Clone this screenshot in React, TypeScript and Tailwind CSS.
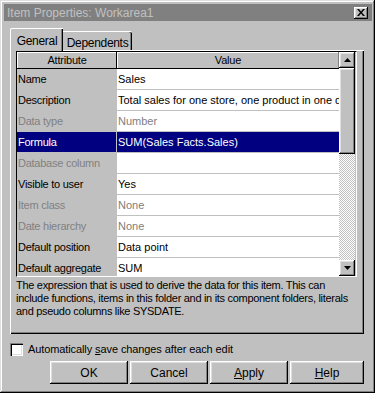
import React from "react";

type Row = { attr: string; value: string; kind?: "disabled" | "selected" };

const rows: Row[] = [
  { attr: "Name", value: "Sales" },
  { attr: "Description", value: "Total sales for one store, one product in one day" },
  { attr: "Data type", value: "Number", kind: "disabled" },
  { attr: "Formula", value: "SUM(Sales Facts.Sales)", kind: "selected" },
  { attr: "Database column", value: "", kind: "disabled" },
  { attr: "Visible to user", value: "Yes" },
  { attr: "Item class", value: "None", kind: "disabled" },
  { attr: "Date hierarchy", value: "None", kind: "disabled" },
  { attr: "Default position", value: "Data point" },
  { attr: "Default aggregate", value: "SUM" },
];

const raised =
  "shadow-[inset_-1px_-1px_#000,inset_1px_1px_#fff,inset_-2px_-2px_#808080,inset_2px_2px_#dfdfdf]";

function ScrollArrow({ up }: { up?: boolean }) {
  return (
    <div className={`w-[16px] h-[16px] bg-[#c0c0c0] flex items-center justify-center ${raised}`}>
      <svg width="7" height="4" viewBox="0 0 7 4">
        {up ? <path d="M3.5 0 L7 4 L0 4 Z" fill="#000" /> : <path d="M0 0 L7 0 L3.5 4 Z" fill="#000" />}
      </svg>
    </div>
  );
}

function Button({ children, w }: { children: React.ReactNode; w: string }) {
  return (
    <button className={`${w} h-[23px] bg-[#c0c0c0] flex items-center justify-center text-[12px] ${raised}`}>
      {children}
    </button>
  );
}

export default function App() {
  return (
    <div className="w-[375px] h-[393px] bg-[#c0c0c0] flex flex-col pt-[4px] pl-[4px] pr-[3px] font-['Liberation_Sans',Arial,sans-serif] text-[11px] text-black shadow-[inset_-1px_-1px_#000,inset_1px_1px_#dfdfdf,inset_-2px_-2px_#808080,inset_2px_2px_#fff] overflow-hidden">
      {/* title bar */}
      <div className="h-[17px] bg-[#808080] flex items-center justify-between pl-[3px] pr-[4px]">
        <span className="text-[#c0c0c0] text-[12px] leading-none">Item Properties: Workarea1</span>
        <div className={`w-[14px] h-[12px] bg-[#c0c0c0] flex items-center justify-center ${raised}`}>
          <svg width="8" height="7" viewBox="0 0 8 7">
            <path d="M0 0 L2 0 L4 2.5 L6 0 L8 0 L5 3.5 L8 7 L6 7 L4 4.5 L2 7 L0 7 L3 3.5 Z" fill="#000" />
          </svg>
        </div>
      </div>

      <div>
        {/* tabs */}
        <div className="flex items-end ml-[6px] mt-[6px] h-[23px] relative z-10 text-[12px] tracking-[-0.3px]">
          <div className="w-[53px] h-[23px] bg-[#c0c0c0] border-l border-t border-white rounded-tl-[2px] shadow-[inset_-1px_0_#000,inset_-2px_0_#808080] flex items-start justify-center pt-[3px] mb-[-1px]">
            General
          </div>
          <div className="w-[69px] h-[19px] bg-[#c0c0c0] border-t border-white rounded-tr-[2px] shadow-[inset_-1px_0_#000,inset_-2px_0_#808080] flex items-start justify-center pt-[2px]">
            Dependents
          </div>
        </div>

        {/* tab panel */}
        <div className="ml-[6px] w-[354px] h-[284px] pt-[1px] pl-[6px] shadow-[inset_1px_1px_#fff,inset_-1px_-1px_#000,inset_-2px_-2px_#808080]">
          <div className="w-[341px] h-[226px] border-l border-t border-black border-r border-b border-r-white border-b-white flex overflow-hidden">
            <div className="w-[322px] flex flex-col">
              <div className="flex h-[17px] border-b border-black shrink-0 tracking-[-0.2px]">
                <div className="w-[100px] bg-[#c0c0c0] flex items-center justify-center shadow-[inset_-1px_0_#000,inset_1px_1px_#fff]">
                  Attribute
                </div>
                <div className="flex-1 bg-[#c0c0c0] flex items-center justify-center shadow-[inset_-1px_0_#808080,inset_1px_1px_#fff]">
                  Value
                </div>
              </div>
              {rows.map((r) => {
                const sel = r.kind === "selected";
                const dis = r.kind === "disabled";
                const txt = sel ? "text-white" : dis ? "text-[#808080]" : "text-black";
                return (
                  <div key={r.attr} className="flex h-[21px] shrink-0">
                    <div
                      className={`w-[100px] pl-[1px] leading-[20px] tracking-[-0.25px] border-r border-b border-[#c0c0c0] whitespace-nowrap overflow-hidden ${
                        sel ? "bg-[#000080]" : "bg-[#c0c0c0]"
                      } ${txt}`}
                    >
                      {r.attr}
                    </div>
                    <div
                      className={`flex-1 pl-[1px] leading-[20px] border-b border-[#c0c0c0] whitespace-nowrap overflow-hidden ${
                        sel ? "bg-[#000080]" : "bg-white"
                      } ${txt}`}
                    >
                      {r.value}
                    </div>
                  </div>
                );
              })}
            </div>
            {/* scrollbar */}
            <div className="w-[16px] flex flex-col">
              <ScrollArrow up />
              <div className={`h-[86px] bg-[#c0c0c0] ${raised}`} />
              <div className="flex-1 bg-[repeating-conic-gradient(#c0c0c0_0_25%,#fff_0_50%)] bg-[size:2px_2px]" />
              <ScrollArrow />
            </div>
          </div>
          <p className="mt-[2px] leading-[13px] tracking-[-0.3px] whitespace-nowrap">
            The expression that is used to derive the data for this item. This can
            <br />
            include functions, items in this folder and in its component folders, literals
            <br />
            and pseudo columns like SYSDATE.
          </p>
        </div>

        {/* checkbox */}
        <div className="flex items-center ml-[6px] mt-[9px] h-[13px]">
          <div className="w-[13px] h-[13px] bg-white shadow-[inset_1px_1px_#808080,inset_2px_2px_#000,inset_-1px_-1px_#fff,inset_-2px_-2px_#dfdfdf]" />
          <span className="ml-[5px] tracking-[-0.1px]">
            Automatically <span className="underline">s</span>ave changes after each edit
          </span>
        </div>

        {/* buttons */}
        <div className="flex ml-[46px] mt-[5px] gap-[2px]">
          <Button w="w-[78px]">OK</Button>
          <Button w="w-[78px]">Cancel</Button>
          <Button w="w-[78px]">
            <span>
              <span className="underline">A</span>pply
            </span>
          </Button>
          <Button w="w-[74px]">
            <span>
              <span className="underline">H</span>elp
            </span>
          </Button>
        </div>
      </div>
    </div>
  );
}
